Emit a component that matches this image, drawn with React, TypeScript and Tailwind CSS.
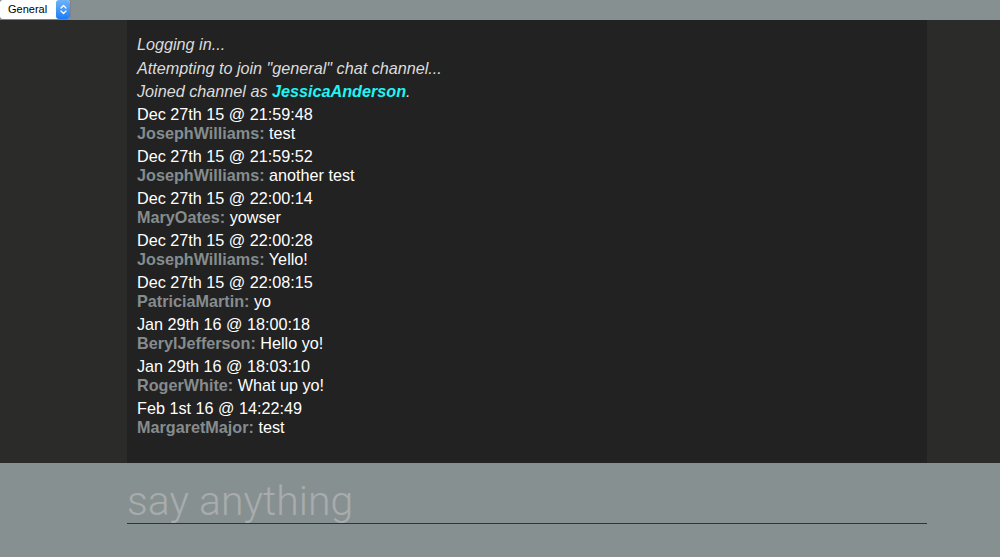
import React from 'react';

const MESSAGES = [
  { time: 'Dec 27th 15 @ 21:59:48', user: 'JosephWilliams', text: 'test' },
  { time: 'Dec 27th 15 @ 21:59:52', user: 'JosephWilliams', text: 'another test' },
  { time: 'Dec 27th 15 @ 22:00:14', user: 'MaryOates', text: 'yowser' },
  { time: 'Dec 27th 15 @ 22:00:28', user: 'JosephWilliams', text: 'Yello!' },
  { time: 'Dec 27th 15 @ 22:08:15', user: 'PatriciaMartin', text: 'yo' },
  { time: 'Jan 29th 16 @ 18:00:18', user: 'BerylJefferson', text: 'Hello yo!' },
  { time: 'Jan 29th 16 @ 18:03:10', user: 'RogerWhite', text: 'What up yo!' },
  { time: 'Feb 1st 16 @ 14:22:49', user: 'MargaretMajor', text: 'test' },
];

export default function App() {
  return (
    <div className="w-[1000px] h-[557px] flex flex-col bg-[#879091] font-['Liberation_Sans',Arial,sans-serif] overflow-hidden">
      {/* channel picker */}
      <div className="h-5 flex items-start">
        <div className="flex items-center h-[19px] bg-white rounded-[3px] shadow-[0_0_0_1px_rgba(0,0,0,0.08)]">
          <span className="pl-2 pr-[9px] text-[11px] leading-none text-black">General</span>
          <span className="w-[14px] h-[19px] rounded-[3px] bg-gradient-to-b from-[#6cb3fa] to-[#1a7cf5] flex items-center justify-center">
            <svg width="7" height="11" viewBox="0 0 7 11" fill="none" stroke="white" strokeWidth="1.3" strokeLinecap="round" strokeLinejoin="round">
              <path d="M1 4 L3.5 1.5 L6 4" />
              <path d="M1 7 L3.5 9.5 L6 7" />
            </svg>
          </span>
        </div>
      </div>

      {/* log */}
      <div className="h-[443px] bg-[#2b2b2a] flex pl-[127px]">
        <div className="w-[800px] bg-[#222222] pt-[15px] px-[10px] text-[16.2px] leading-[19px]">
          <p className="italic text-[#dcdcdc] mb-[4.5px]">Logging in...</p>
          <p className="italic text-[#dcdcdc] mb-[4.5px]">Attempting to join "general" chat channel...</p>
          <p className="italic text-[#dcdcdc] mb-[4px]">
            Joined channel as <span className="font-bold text-[#1ff5f5]">JessicaAnderson</span>.
          </p>
          {MESSAGES.map((m, i) => (
            <div key={i} className="mb-[4px]">
              <div className="text-white">{m.time}</div>
              <div className="text-white">
                <span className="font-bold text-[#868c8d]">{m.user}:</span> {m.text}
              </div>
            </div>
          ))}
        </div>
      </div>

      {/* input */}
      <div className="flex-1 flex pl-[127px]">
        <div className="w-[800px] pt-[15px]">
          <input
            placeholder="say anything"
            className="w-full h-[46px] bg-transparent border-b border-[#333333] outline-none text-[41px] font-light font-['Roboto',sans-serif] text-white placeholder:text-[#a8acad] leading-none"
          />
        </div>
      </div>
    </div>
  );
}
